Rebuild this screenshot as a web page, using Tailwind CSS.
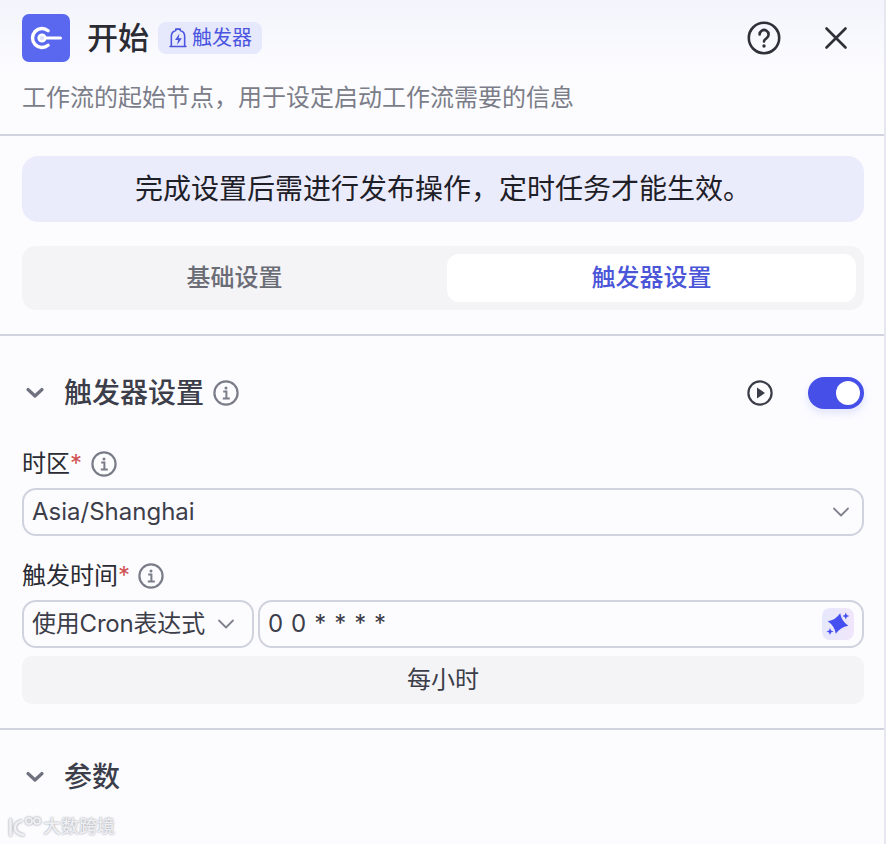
<!DOCTYPE html>
<html lang="zh-CN">
<head>
    <meta charset="UTF-8">
    <title>开始</title>
    <script src="https://cdn.jsdelivr.net/npm/@tailwindcss/browser@4"></script>
</head>
<body class="w-[890px] h-[844px] overflow-hidden bg-white font-['Inter','Noto_Sans_CJK_SC',sans-serif] text-[#1c1d23]">

<div class="relative w-[886px] h-[844px] bg-[#fcfcff] border-r-2 border-[#e6e7f0] overflow-hidden">

    <!-- Header -->
    <header class="h-[136px] border-b-2 border-[#d0d2de] bg-gradient-to-b from-[#f3f4fc] to-[#fcfcff] to-[70px] pl-[22px] pr-[20px] pt-[14px]">
        <div class="flex items-center h-[48px]">
            <div class="w-[48px] h-[48px] rounded-[7px] bg-[#5a68f0] flex items-center justify-center">
                <svg width="32" height="32" viewBox="0 0 32 32" fill="none" stroke="white" stroke-linecap="round">
                    <path d="M18.100 8.700a9.500 9.500 0 1 0 0 14.600" stroke-width="3.400"/>
                    <circle cx="12" cy="16" r="3.400" fill="#dfe2fd" stroke-width="2.400"/>
                    <path d="M15.500 16h15" stroke-width="3"/>
                </svg>
            </div>
            <h1 class="ml-[17px] text-[31px] leading-[48px] font-medium text-[#2b2c33]">开始</h1>
            <div class="ml-[9px] h-[32px] w-[104px] rounded-[8px] bg-[#e6e8fb] flex items-center pl-[11px] text-[#4a55e0]">
                <svg width="18" height="20" viewBox="0 0 16 18" fill="none" stroke="currentColor" stroke-width="1.400" stroke-linecap="round" stroke-linejoin="round">
                    <path d="M2 16.500V7.500a5.500 5.500 0 0 1 4-5.300V1h4v1.200a5.500 5.500 0 0 1 4 5.300v9"/>
                    <path d="M.8 16.700h14.400"/>
                    <path d="M9.300 5l-4 5.800h2.800l-1 4.400 4.400-6h-2.900z" fill="currentColor" stroke="none"/>
                </svg>
                <span class="ml-[5px] text-[20px] leading-[32px] whitespace-nowrap">触发器</span>
            </div>
            <button class="ml-auto mr-[42px] text-[#2f3038]">
                <svg class="block" width="34" height="34" viewBox="0 0 34 34" fill="none" stroke="currentColor" stroke-width="2.600" stroke-linecap="round">
                    <circle cx="17" cy="17" r="15.200"/>
                    <path d="M12.600 13.400a4.500 4.500 0 1 1 6.800 3.900c-1.500.9-2.400 1.700-2.400 3.100"/>
                    <circle cx="17" cy="25" r="1.700" fill="currentColor" stroke="none"/>
                </svg>
            </button>
            <button class="mr-[15px] text-[#2f3038]">
                <svg class="block" width="26" height="26" viewBox="0 0 26 26" fill="none" stroke="currentColor" stroke-width="2.600" stroke-linecap="round">
                    <path d="M3.500 3.500l19 19M22.500 3.500l-19 19"/>
                </svg>
            </button>
        </div>
        <p class="mt-[14px] text-[24px] leading-[44px] text-[#7b7d88] whitespace-nowrap">工作流的起始节点，用于设定启动工作流需要的信息</p>
    </header>

    <!-- Banner + tabs -->
    <section class="h-[200px] border-b-2 border-[#d0d2de] pl-[22px] pr-[20px] pt-[20px]">
        <div class="h-[66px] rounded-[16px] bg-[#eaecfc] flex items-center justify-center text-[28px] text-[#1f2027]">完成设置后需进行发布操作，定时任务才能生效。</div>
        <div class="mt-[24px] h-[64px] rounded-[14px] bg-[#f4f4f7] flex p-[8px] text-[24px] font-medium">
            <div class="w-[417px] pr-[8px] flex items-center justify-center text-[#6b6d76]">基础设置</div>
            <div class="flex-1 rounded-[12px] bg-white flex items-center justify-center text-[#4a55d8]">触发器设置</div>
        </div>
    </section>

    <!-- Trigger settings -->
    <section class="h-[394px] border-b-2 border-[#d0d2de] pl-[22px] pr-[20px] pt-[40px]">
        <div class="h-[34px] flex items-center">
            <svg class="ml-[3px]" width="20" height="14" viewBox="0 0 20 14" fill="none" stroke="#6f717e" stroke-width="3.200" stroke-linecap="round" stroke-linejoin="round">
                <path d="M3 3.500l7 6.500 7-6.500"/>
            </svg>
            <h2 class="ml-[19px] text-[28px] leading-[34px] font-medium text-[#3c3e4a] whitespace-nowrap">触发器设置</h2>
            <svg class="ml-[9px]" width="26" height="26" viewBox="0 0 26 26" fill="none" stroke="#7a7c88" stroke-width="2.200">
                <circle cx="13" cy="13" r="11.600"/>
                <circle cx="13" cy="7.900" r="1.500" fill="#7a7c88" stroke="none"/>
                <path d="M10.200 11.400H13.400V18.400M9.800 18.600h7" stroke-width="2"/>
            </svg>
            <svg class="ml-auto" width="26" height="26" viewBox="0 0 26 26" fill="none" stroke="#3a3c47" stroke-width="2.200">
                <circle cx="13" cy="13" r="11.600"/>
                <path d="M10 7.500l8 5.500-8 5.500z" fill="#3a3c47" stroke="none"/>
            </svg>
            <div class="ml-[35px] w-[56px] h-[32px] rounded-full bg-[#4650e8] shadow-[0_4px_8px_rgba(70,80,232,0.15)] flex items-center justify-end pr-[4px]">
                <div class="w-[24px] h-[24px] rounded-full bg-white"></div>
            </div>
        </div>

        <div class="mt-[39px] h-[30px] flex items-center text-[24px]">
            <span class="text-[#2a2b33]">时区</span><span class="text-[#cf5050]">*</span>
            <svg class="ml-[9px]" width="26" height="26" viewBox="0 0 26 26" fill="none" stroke="#7a7c88" stroke-width="2.200">
                <circle cx="13" cy="13" r="11.600"/>
                <circle cx="13" cy="7.900" r="1.500" fill="#7a7c88" stroke="none"/>
                <path d="M10.200 11.400H13.400V18.400M9.800 18.600h7" stroke-width="2"/>
            </svg>
        </div>
        <div class="mt-[9px] h-[48px] rounded-[14px] border-2 border-[#d0d2de] flex items-center pl-[8px] pr-[12px] text-[24px] text-[#3c3e4a]">
            Asia/Shanghai
            <svg class="ml-auto" width="18" height="12" viewBox="0 0 18 12" fill="none" stroke="#80828d" stroke-width="1.800" stroke-linecap="round" stroke-linejoin="round">
                <path d="M2 2.500l7 7 7-7"/>
            </svg>
        </div>

        <div class="mt-[25px] h-[30px] flex items-center text-[24px]">
            <span class="text-[#2a2b33]">触发时间</span><span class="text-[#cf5050]">*</span>
            <svg class="ml-[8px]" width="26" height="26" viewBox="0 0 26 26" fill="none" stroke="#7a7c88" stroke-width="2.200">
                <circle cx="13" cy="13" r="11.600"/>
                <circle cx="13" cy="7.900" r="1.500" fill="#7a7c88" stroke="none"/>
                <path d="M10.200 11.400H13.400V18.400M9.800 18.600h7" stroke-width="2"/>
            </svg>
        </div>
        <div class="mt-[9px] h-[48px] flex gap-[4px]">
            <div class="w-[232px] rounded-[14px] border-2 border-[#d0d2de] flex items-center pl-[8px] pr-[17px] text-[24px] tracking-[-0.2px] text-[#3c3e4a] whitespace-nowrap">
                使用Cron表达式
                <svg class="ml-auto" width="18" height="12" viewBox="0 0 18 12" fill="none" stroke="#80828d" stroke-width="1.800" stroke-linecap="round" stroke-linejoin="round">
                    <path d="M2 2.500l7 7 7-7"/>
                </svg>
            </div>
            <div class="flex-1 rounded-[14px] border-2 border-[#d0d2de] flex items-center pl-[8px] pr-[8px] text-[24px] tracking-[0.6px] text-[#3c3e4a]">
                0 0 * * * *
                <div class="ml-auto w-[32px] h-[32px] rounded-[8px] bg-gradient-to-r from-[#e6e8fd] to-[#f0e6fb] flex items-center justify-center">
                    <svg width="26" height="26" viewBox="0 0 26 26" fill="#4650f0">
                        <path d="M13 2Q16 9.500 23.500 12.500Q16 15.500 13 23Q10 15.500 2.500 12.500Q10 9.500 13 2z" transform="rotate(12 13 12.500)"/>
                        <path d="M20.800 1.500l1 2.500 2.500 1-2.500 1-1 2.500-1-2.500-2.500-1 2.500-1z"/>
                        <path d="M5 17l1 2.500 2.500 1-2.500 1-1 2.500-1-2.500-2.500-1 2.500-1z"/>
                    </svg>
                </div>
            </div>
        </div>
        <div class="mt-[8px] h-[48px] rounded-[10px] bg-[#f4f4f7] flex items-center justify-center text-[24px] text-[#3c3e4a]">每小时</div>
    </section>

    <!-- Params -->
    <section class="pl-[22px] pr-[20px] pt-[30px]">
        <div class="h-[34px] flex items-center">
            <svg class="ml-[3px]" width="20" height="14" viewBox="0 0 20 14" fill="none" stroke="#6f717e" stroke-width="3.200" stroke-linecap="round" stroke-linejoin="round">
                <path d="M3 3.500l7 6.500 7-6.500"/>
            </svg>
            <h2 class="ml-[19px] text-[28px] leading-[34px] font-medium text-[#3c3e4a]">参数</h2>
        </div>
    </section>

    <!-- Watermark -->
    <div class="absolute left-[8px] top-[814px] flex items-center text-[#eeeff2]">
        <svg class="drop-shadow-[0_0_1px_#8e9099]" width="36" height="26" viewBox="0 0 36 26" fill="none" stroke="currentColor" stroke-width="2.800" stroke-linecap="round">
            <path d="M2.500 6v15M13 7c-4 1-6 4-6 7 0 4 4 6 8 7"/>
            <circle cx="21" cy="7" r="3" stroke-width="2"/>
            <circle cx="29" cy="7" r="3" stroke-width="2"/>
        </svg>
        <span class="ml-[-1px] text-[18px] leading-[26px] font-medium whitespace-nowrap [text-shadow:0_0_2px_#8e9099]">大数跨境</span>
    </div>
</div>

</body>
</html>
